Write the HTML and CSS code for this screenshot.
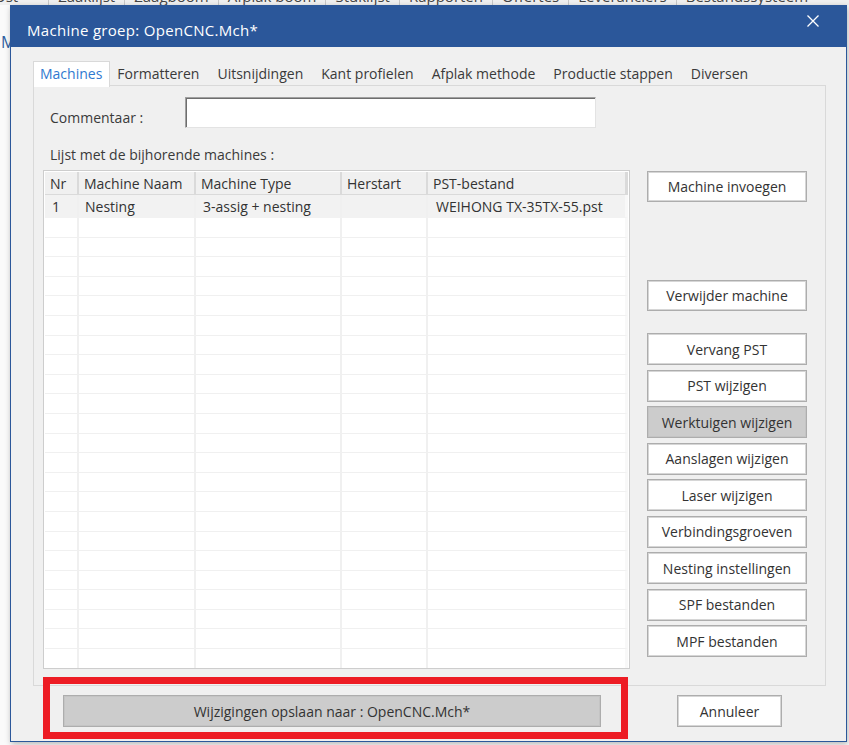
FILE: index.html
```html
<!DOCTYPE html>
<html lang="nl">
<head>
<meta charset="utf-8">
<title>Machine groep</title>
<link rel="stylesheet" href="styles.css">
</head>
<body>
<div class="desktop">
  <div class="menubar">
    <span class="menu-item first">Ost</span>
    <span class="menu-item">Zaaklijst</span>
    <span class="menu-item">Zaagboom</span>
    <span class="menu-item">Afplak boom</span>
    <span class="menu-item">Stuklijst</span>
    <span class="menu-item">Rapporten</span>
    <span class="menu-item">Offertes</span>
    <span class="menu-item">Leveranciers</span>
    <span class="menu-item">Bestandssysteem</span>
  </div>
  <div class="side-letter">M</div>
</div>

<div class="dialog">
  <div class="titlebar">
    <span class="title">Machine groep: OpenCNC.Mch*</span>
    <svg class="close" width="12" height="12" viewBox="0 0 12 12"><path d="M0.5 0.5 L11.5 11.5 M11.5 0.5 L0.5 11.5" stroke="#ffffff" stroke-width="1.3" fill="none"/></svg>
  </div>
  <div class="dialog-body">
    <div class="tabs">
      <div class="tab active">Machines</div>
      <div class="tab">Formatteren</div>
      <div class="tab">Uitsnijdingen</div>
      <div class="tab">Kant profielen</div>
      <div class="tab">Afplak methode</div>
      <div class="tab">Productie stappen</div>
      <div class="tab">Diversen</div>
    </div>
    <div class="panel">
      <div class="comment-row">
        <label class="comment-label">Commentaar :</label>
        <div class="textbox"></div>
      </div>
      <div class="list-label">Lijst met de bijhorende machines :</div>
      <div class="main-row">
        <div class="grid">
          <table class="machines">
            <colgroup>
              <col class="c-nr"><col class="c-naam"><col class="c-type"><col class="c-herstart"><col class="c-pst">
            </colgroup>
            <thead>
              <tr><th>Nr</th><th>Machine Naam</th><th>Machine Type</th><th>Herstart</th><th>PST-bestand</th></tr>
            </thead>
            <tbody>
              <tr class="data"><td>1</td><td>Nesting</td><td>3-assig + nesting</td><td></td><td>WEIHONG TX-35TX-55.pst</td></tr>
              <tr><td></td><td></td><td></td><td></td><td></td></tr>
              <tr><td></td><td></td><td></td><td></td><td></td></tr>
              <tr><td></td><td></td><td></td><td></td><td></td></tr>
              <tr><td></td><td></td><td></td><td></td><td></td></tr>
              <tr><td></td><td></td><td></td><td></td><td></td></tr>
              <tr><td></td><td></td><td></td><td></td><td></td></tr>
              <tr><td></td><td></td><td></td><td></td><td></td></tr>
              <tr><td></td><td></td><td></td><td></td><td></td></tr>
              <tr><td></td><td></td><td></td><td></td><td></td></tr>
              <tr><td></td><td></td><td></td><td></td><td></td></tr>
              <tr><td></td><td></td><td></td><td></td><td></td></tr>
              <tr><td></td><td></td><td></td><td></td><td></td></tr>
              <tr><td></td><td></td><td></td><td></td><td></td></tr>
              <tr><td></td><td></td><td></td><td></td><td></td></tr>
              <tr><td></td><td></td><td></td><td></td><td></td></tr>
              <tr><td></td><td></td><td></td><td></td><td></td></tr>
              <tr><td></td><td></td><td></td><td></td><td></td></tr>
              <tr><td></td><td></td><td></td><td></td><td></td></tr>
              <tr><td></td><td></td><td></td><td></td><td></td></tr>
              <tr><td></td><td></td><td></td><td></td><td></td></tr>
              <tr><td></td><td></td><td></td><td></td><td></td></tr>
              <tr><td></td><td></td><td></td><td></td><td></td></tr>
              <tr><td></td><td></td><td></td><td></td><td></td></tr>
            </tbody>
          </table>
        </div>
        <div class="buttons">
          <button class="btn btn-insert">Machine invoegen</button>
          <button class="btn btn-remove">Verwijder machine</button>
          <button class="btn btn-first">Vervang PST</button>
          <button class="btn">PST wijzigen</button>
          <button class="btn btn-gray">Werktuigen wijzigen</button>
          <button class="btn">Aanslagen wijzigen</button>
          <button class="btn">Laser wijzigen</button>
          <button class="btn">Verbindingsgroeven</button>
          <button class="btn">Nesting instellingen</button>
          <button class="btn">SPF bestanden</button>
          <button class="btn">MPF bestanden</button>
        </div>
      </div>
    </div>
    <div class="footer">
      <button class="btn btn-save">Wijzigingen opslaan naar : OpenCNC.Mch*</button>
      <button class="btn btn-cancel">Annuleer</button>
    </div>
  </div>
  <div class="highlight"></div>
</div>
</body>
</html>
```

FILE: styles.css
```css
html, body {
  margin: 0;
  padding: 0;
}
body {
  width: 849px;
  height: 745px;
  overflow: hidden;
  background: #f3f3f3;
  font-family: "Open Sans", "Noto Sans", sans-serif;
  font-size: 14px;
  color: #333333;
  position: relative;
}

/* desktop behind dialog */
.desktop {
  height: 745px;
  background: #fafafa;
}
.menubar {
  height: 5px;
  overflow: hidden;
  display: flex;
  background: #f0f0f0;
}
.menu-item {
  display: block;
  font-size: 15px;
  line-height: 20px;
  margin-top: -14px;
  padding: 0 9px;
  border-left: 1px solid #c8c8c8;
  color: #444;
  white-space: nowrap;
}
.menu-item.first {
  border-left: none;
  padding-left: 0;
  margin-left: -6px;
  padding-right: 30px;
}
.side-letter {
  margin-top: 30px;
  padding-left: 1px;
  color: #2f5f9f;
  font-size: 16px;
  line-height: 14px;
}

/* dialog window */
.dialog {
  position: absolute;
  left: 10px;
  top: 5px;
  width: 837px;
  height: 737px;
  box-sizing: border-box;
  background: #f0f0f0;
  border: 1px solid #2b579a;
  border-top: none;
  box-shadow: 1px 2px 6px rgba(0, 0, 0, 0.28);
  display: flex;
  flex-direction: column;
}
.titlebar {
  height: 42px;
  flex: none;
  background: #2b579a;
  color: #ffffff;
  display: flex;
  align-items: flex-start;
  padding-left: 16px;
}
.title {
  font-size: 15px;
  line-height: 20px;
  padding-top: 15px;
  letter-spacing: 0.3px;
}
.close {
  margin-left: auto;
  margin-right: 27px;
  margin-top: 10px;
}

.dialog-body {
  padding: 14px 20px 0 22px;
  display: flex;
  flex-direction: column;
}

/* tabs */
.tabs {
  display: flex;
  height: 25px;
  position: relative;
  z-index: 1;
}
.tab {
  padding: 0 9px;
  line-height: 25px;
  color: #3a3a3a;
  white-space: nowrap;
}
.tab.active {
  background: #ffffff;
  border: 1px solid #d9d9d9;
  border-bottom: none;
  color: #2f79d0;
  line-height: 24px;
  box-sizing: border-box;
  padding: 0 7px 0 6px;
  height: 26px;
  margin-right: -2px;
}

.panel {
  height: 601px;
  box-sizing: border-box;
  border: 1px solid #d9d9d9;
  margin-top: -1px;
  padding: 11px 0 0 9px;
  background: #f0f0f0;
}

.comment-row {
  display: flex;
  height: 31px;
}
.comment-label {
  width: 135px;
  padding-left: 7px;
  padding-top: 11px;
  line-height: 20px;
  color: #3a3a3a;
}
.textbox {
  width: 411px;
  height: 31px;
  box-sizing: border-box;
  background: #ffffff;
  border: 1px solid;
  border-color: #a0a0a0 #e3e3e3 #e3e3e3 #a0a0a0;
  box-shadow: inset 1px 1px 0 #6e6e6e;
}
.list-label {
  height: 42px;
  box-sizing: border-box;
  padding: 17px 0 0 7px;
  line-height: 20px;
  color: #3a3a3a;
}

.main-row {
  display: flex;
  gap: 17px;
}

/* list view */
.grid {
  width: 587px;
  height: 499px;
  box-sizing: border-box;
  border: 1px solid #cdcdcd;
  padding: 1px;
  background: #ffffff;
  overflow: hidden;
}
.machines {
  border-collapse: separate;
  border-spacing: 0;
  table-layout: fixed;
  width: 583px;
  font-size: 14px;
}
.c-nr { width: 34px; }
.c-naam { width: 117px; }
.c-type { width: 146px; }
.c-herstart { width: 86px; }
.c-pst { width: 200px; }
.machines th {
  height: 23px;
  box-sizing: border-box;
  padding: 1px 0 0 5px;
  text-align: left;
  font-weight: normal;
  background: #f0f0f0;
  border-right: 2px solid #dadada;
  border-bottom: 1px solid #dadada;
  color: #333333;
  white-space: nowrap;
  line-height: 20px;
}
.machines th:last-child {
  border-right: 3px solid #dadada;
}
.machines td {
  height: 19.6px;
  box-sizing: border-box;
  padding: 0 0 0 6px;
  border-right: 2px solid #f0f0f0;
  border-bottom: 1px solid #f0f0f0;
  white-space: nowrap;
  line-height: 18px;
  color: #333333;
}
.machines td:last-child {
  border-right: 3px solid #f8f8f8;
}
.machines tr.data td {
  height: 21px;
  background: #f2f2f2;
  border-bottom: 1px solid #f2f2f2;
  line-height: 20px;
  padding-top: 2px;
  vertical-align: top;
}
.machines tr.data td:first-child {
  padding-left: 7px;
}
.machines tr.data td:nth-child(3) {
  padding-left: 7px;
}
.machines tr.data td:nth-child(5) {
  padding-left: 8px;
}

/* buttons */
.buttons {
  display: flex;
  flex-direction: column;
  width: 160px;
}
.btn {
  font-family: inherit;
  font-size: 14px;
  color: #333333;
  background: #ffffff;
  border: 1px solid #adadad;
  box-shadow: inset 0 0 0 1px #d6d6d6;
  height: 32px;
  padding: 0;
  margin: 4.5px 0 0 0;
  white-space: nowrap;
}
.btn-insert { margin-top: 1px; height: 31px; }
.btn-remove { margin-top: 78px; height: 31px; }
.btn-first { margin-top: 22px; }
.btn-gray {
  background: #cccccc;
  box-shadow: inset 0 0 0 1px #c4c4c4;
}

.footer {
  display: flex;
  padding-left: 30px;
  margin-top: 9px;
  gap: 76px;
}
.btn-save {
  margin: 0;
  width: 538px;
  background: #cccccc;
  box-shadow: inset 0 0 0 1px #c4c4c4;
}
.btn-cancel {
  margin: 0;
  width: 105px;
}

/* red annotation frame */
.highlight {
  position: absolute;
  left: 32px;
  top: 672px;
  width: 585px;
  height: 62px;
  box-sizing: border-box;
  border: 7px solid #ed1c24;
  pointer-events: none;
}
```
